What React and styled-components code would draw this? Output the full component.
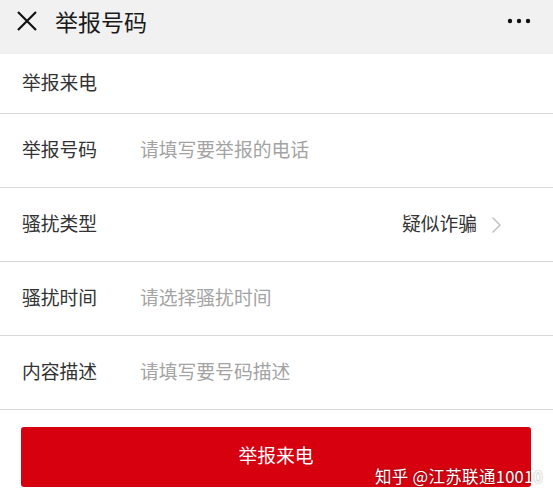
import React from "react";
import styled, { createGlobalStyle } from "styled-components";

const Global = createGlobalStyle`
  html, body { margin: 0; padding: 0; background: #fff; }
  body { font-family: "Noto Sans CJK SC", "Noto Sans", sans-serif; }
`;

const Page = styled.div`
  position: relative;
  width: 553px;
  height: 500px;
  background: #fff;
  overflow: hidden;
`;

const Header = styled.div`
  height: 54px;
  background: #f1f1f1;
  display: flex;
  align-items: center;
  padding: 0 22px 0 15px;
  box-sizing: border-box;
`;

const Title = styled.div`
  font-size: 23px;
  color: #1a1a1a;
  margin-left: 16px;
  flex: 1;
  line-height: 1;
  margin-top: -12px;
`;

const IconWrap = styled.div`
  display: flex;
  margin-top: -12px;
`;

const Row = styled.div`
  height: ${(p) => p.$h}px;
  display: flex;
  align-items: center;
  padding: 0 51px 0 22px;
  box-sizing: border-box;
  border-bottom: 1px solid #d8d8d8;
  font-size: 18.8px;
  line-height: 1;
`;

const Label = styled.div`
  color: #333;
  width: 118px;
  flex-shrink: 0;
  margin-top: -2px;
`;

const Placeholder = styled.div`
  color: #a3a3a3;
  flex: 1;
  margin-top: -2px;
`;

const Value = styled.div`
  color: #333;
  flex: 1;
  text-align: right;
  margin-right: 14px;
  margin-top: -2px;
`;

const ButtonArea = styled.div`
  padding: 17px 22px 0 21px;
`;

const Button = styled.div`
  height: 60px;
  background: #d6000f;
  border-radius: 3px;
  color: #fff;
  font-size: 18.8px;
  line-height: 1;
  display: flex;
  align-items: center;
  justify-content: center;
  padding-bottom: 4px;
  box-sizing: border-box;
`;

const Watermark = styled.div`
  position: absolute;
  left: 375px;
  top: 464px;
  font-size: 16.5px;
  letter-spacing: 0.3px;
  color: #fff;
  text-shadow: 0 0 2px rgba(0,0,0,0.45);
  white-space: nowrap;
`;

const rows = [
  { label: "举报号码", placeholder: "请填写要举报的电话" },
  { label: "骚扰类型", value: "疑似诈骗" },
  { label: "骚扰时间", placeholder: "请选择骚扰时间" },
  { label: "内容描述", placeholder: "请填写要号码描述" },
];

export default function App() {
  return (
    <Page>
      <Global />
      <Header>
        <IconWrap>
          <svg width="24" height="24" viewBox="0 0 24 24">
            <path d="M3 3 L21 21 M21 3 L3 21" stroke="#111" strokeWidth="2.2" fill="none" />
          </svg>
        </IconWrap>
        <Title>举报号码</Title>
        <IconWrap>
          <svg width="24" height="6" viewBox="0 0 24 6">
            <circle cx="3" cy="3" r="2.2" fill="#111" />
            <circle cx="12" cy="3" r="2.2" fill="#111" />
            <circle cx="21" cy="3" r="2.2" fill="#111" />
          </svg>
        </IconWrap>
      </Header>
      <Row $h={60}>
        <Label>举报来电</Label>
      </Row>
      {rows.map((r) => (
        <Row key={r.label} $h={74}>
          <Label>{r.label}</Label>
          {r.placeholder && <Placeholder>{r.placeholder}</Placeholder>}
          {r.value && (
            <>
              <Value>{r.value}</Value>
              <svg width="11" height="18" viewBox="0 0 11 18">
                <path d="M1.5 1.5 L9 9 L1.5 16.5" stroke="#c2c2c2" strokeWidth="1.5" fill="none" />
              </svg>
            </>
          )}
        </Row>
      ))}
      <ButtonArea>
        <Button>举报来电</Button>
      </ButtonArea>
      <Watermark>知乎 @江苏联通10010</Watermark>
    </Page>
  );
}
